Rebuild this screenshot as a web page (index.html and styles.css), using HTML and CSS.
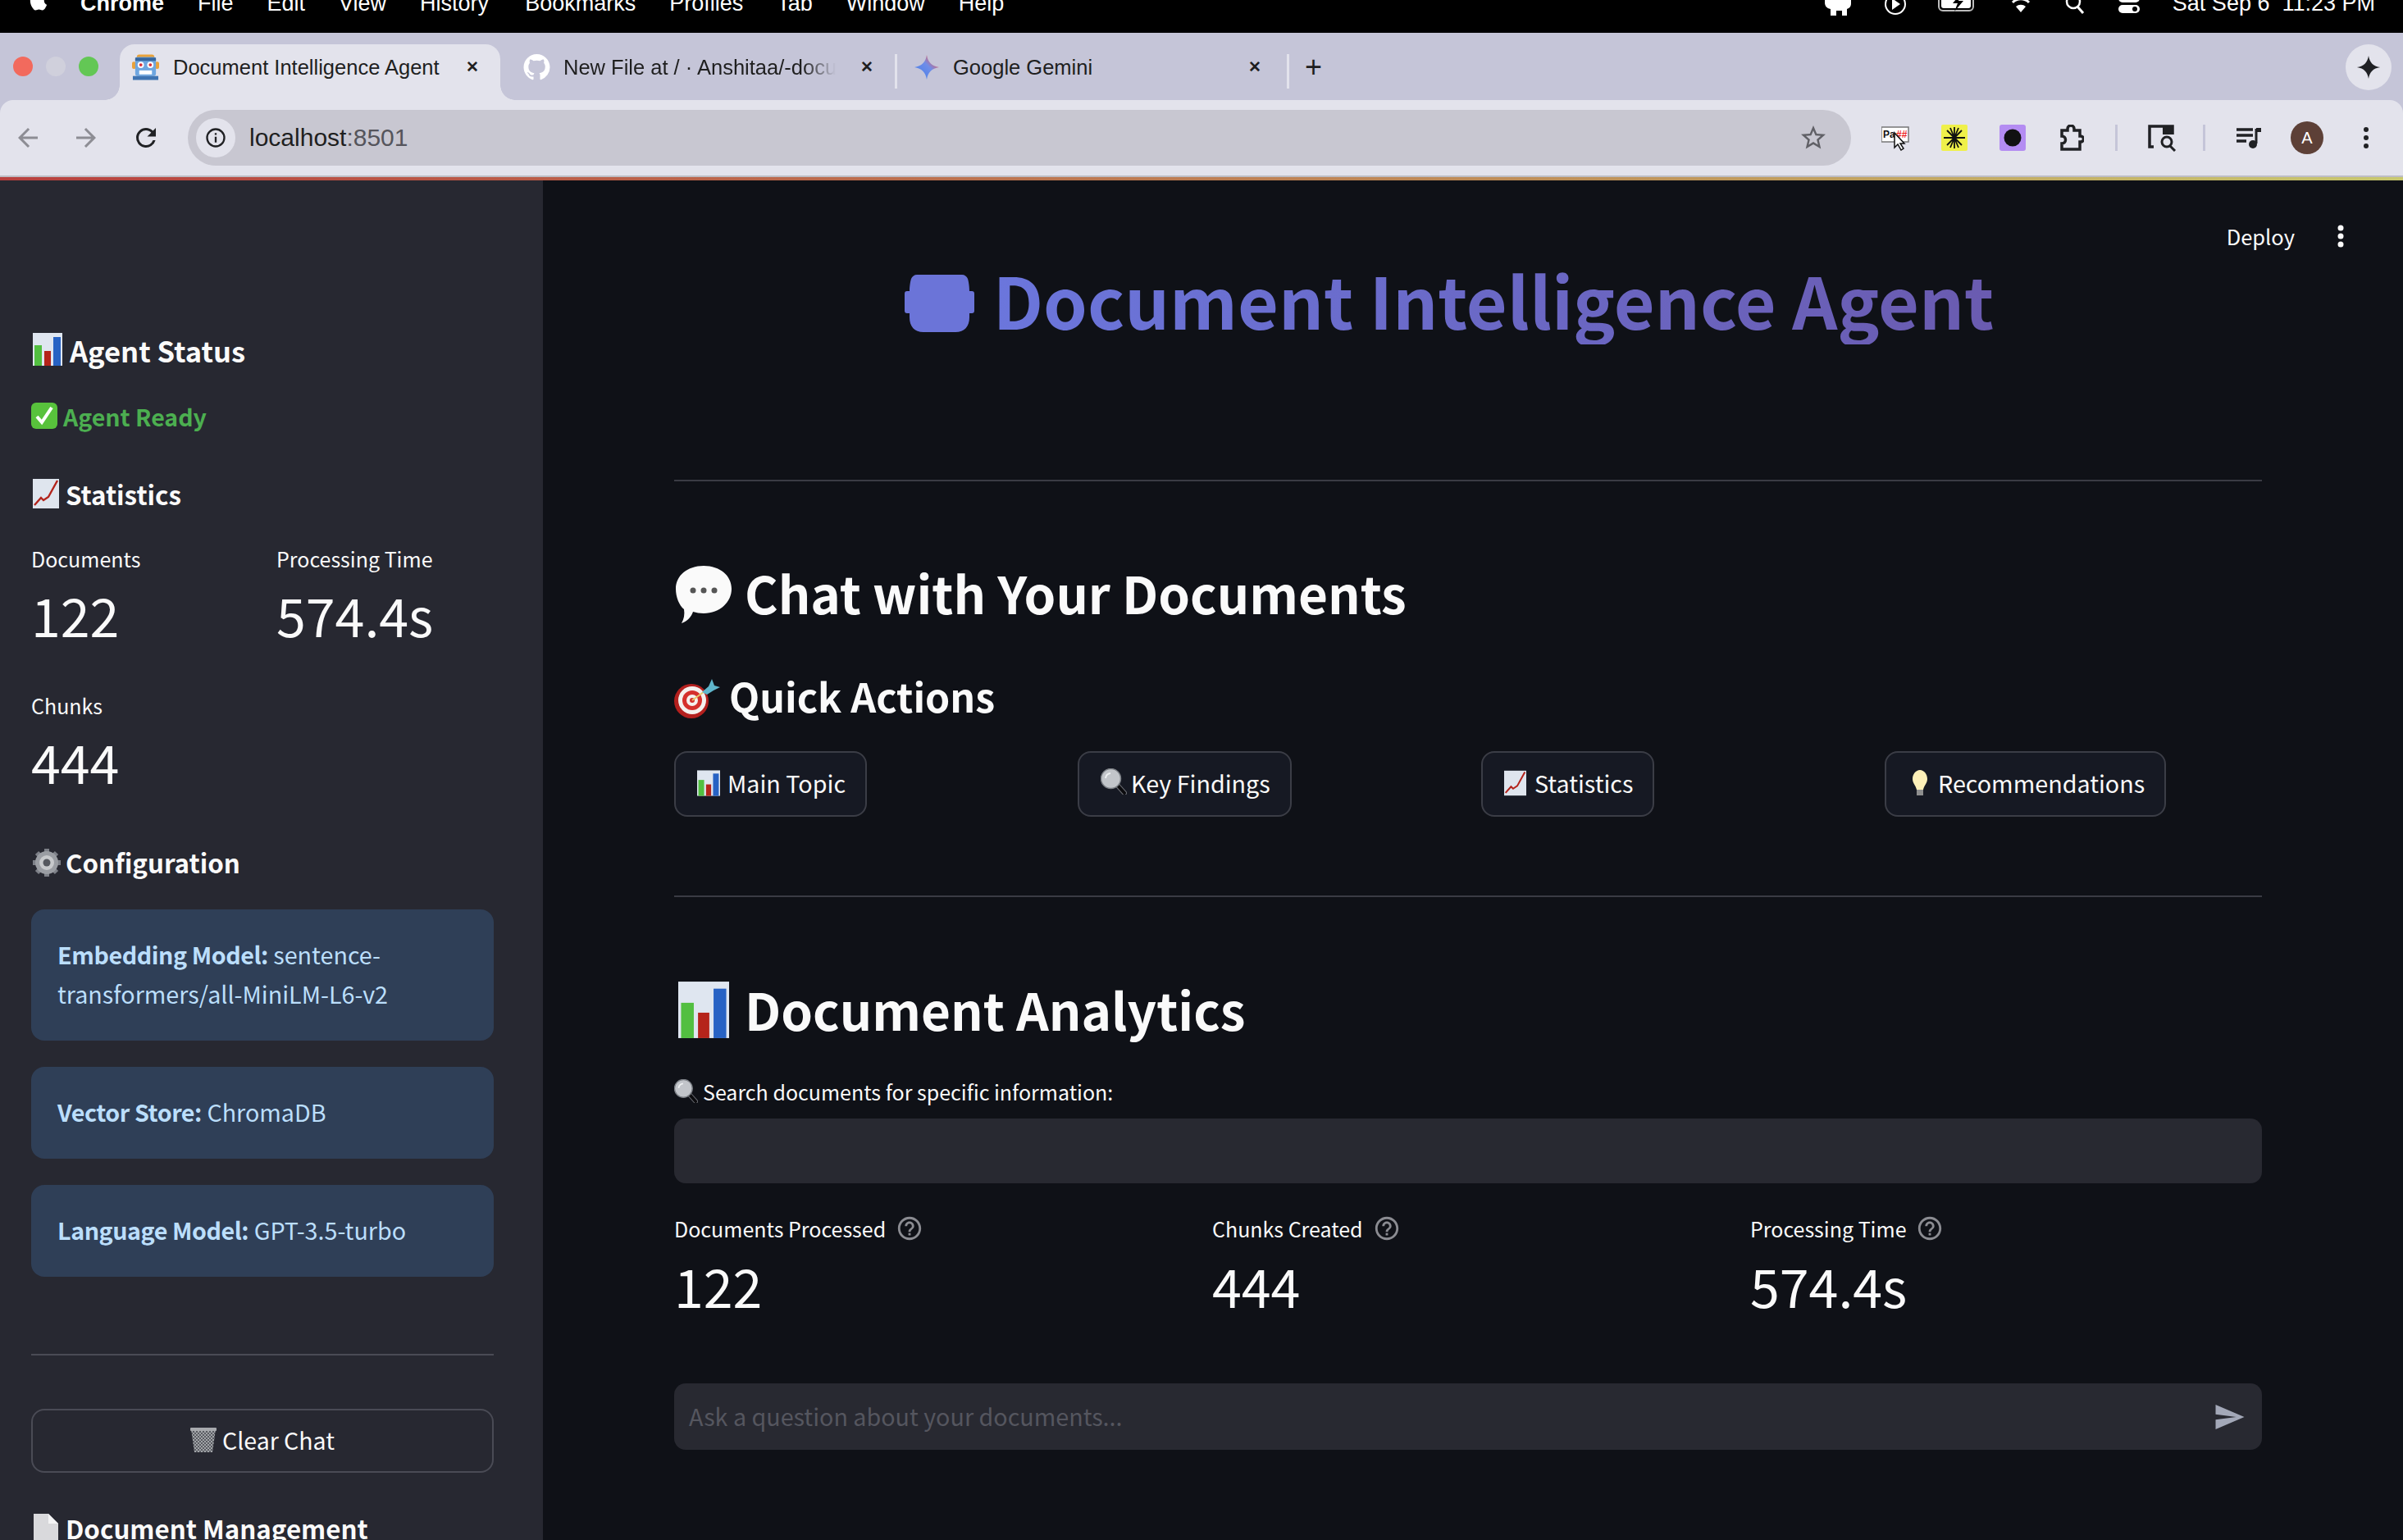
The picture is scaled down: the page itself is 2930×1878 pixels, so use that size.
FILE: index.html
```html
<!DOCTYPE html>
<html lang="en">
<head>
    <meta charset="UTF-8">
    <title>Document Intelligence Agent</title>
    <link rel="stylesheet" href="styles.css">
</head>
<body>
    <!-- emoji drawings used more than once -->
    <svg class="defs" aria-hidden="true">
        <symbol id="bars" viewBox="0 0 36 40">
            <rect width="36" height="40" fill="#dfe6f0"/>
            <rect x="2" y="15" width="9" height="25" fill="#52bf40"/>
            <rect x="14" y="22" width="8" height="18" fill="#b5241b"/>
            <rect x="25" y="5" width="9" height="35" fill="#2762c4"/>
        </symbol>
        <symbol id="trend" viewBox="0 0 32 36">
            <rect width="32" height="36" fill="#dfe5ee"/>
            <path d="M2 32l8-9 3 3 6-4L30 2" fill="none" stroke="#b3231b" stroke-width="2.4"/>
        </symbol>
        <symbol id="lens" viewBox="0 0 32 32">
            <path d="M20 20l9 10" stroke="#6d6f75" stroke-width="6" stroke-linecap="round"/>
            <path d="M21 21l8 9" stroke="#0b0b0e" stroke-width="4" stroke-linecap="round"/>
            <circle cx="12.500" cy="12.500" r="12" fill="#c2c5ca" stroke="#7b7f85" stroke-width="1.500"/>
            <path d="M6 12a7 7 0 0 1 6-6" fill="none" stroke="#eef0f2" stroke-width="2"/>
        </symbol>
        <symbol id="help" viewBox="0 0 24 24">
            <path fill="#8b8c92" d="M11 18h2v-2h-2v2zm1-16C6.48 2 2 6.48 2 12s4.48 10 10 10 10-4.48 10-10S17.52 2 12 2zm0 18c-4.41 0-8-3.59-8-8s3.59-8 8-8 8 3.59 8 8-3.59 8-8 8zm0-14c-2.21 0-4 1.79-4 4h2c0-1.1.9-2 2-2s2 .9 2 2c0 2-3 1.75-3 5h2c0-2.25 3-2.5 3-5 0-2.21-1.79-4-4-4z"/>
        </symbol>
    </svg>

    <div class="menubar">
        <svg class="apple" viewBox="0 0 24 24"><path fill="#fff" d="M18.71 19.5c-.83 1.24-1.71 2.45-3.05 2.47-1.34.03-1.77-.79-3.29-.79-1.53 0-2 .77-3.27.82-1.31.05-2.3-1.32-3.14-2.53C4.25 17 2.94 12.45 4.7 9.39c.87-1.52 2.43-2.48 4.12-2.51 1.28-.02 2.5.87 3.29.87.78 0 2.26-1.07 3.81-.91.65.03 2.47.26 3.64 1.98-.09.06-2.17 1.28-2.15 3.81.03 3.02 2.65 4.03 2.68 4.04-.03.07-.42 1.44-1.38 2.83M13 3.5c.73-.83 1.94-1.46 2.94-1.5.13 1.17-.34 2.35-1.04 3.19-.69.85-1.83 1.51-2.95 1.42-.15-1.15.41-2.35 1.05-3.11z"/></svg>
        <span class="menu-app">Chrome</span>
        <span>File</span><span>Edit</span><span>View</span><span>History</span><span class="menu-wide">Bookmarks</span><span>Profiles</span><span>Tab</span><span>Window</span><span>Help</span>
        <div class="menu-status">
            <svg width="36" height="20" viewBox="0 0 36 20"><path fill="#fff" d="M2 -6h32v10c0 4-2 6-5 7v8h-6v-6h-7v6H9v-8C4 10 2 7 2 3z"/></svg>
            <svg width="26" height="20" viewBox="0 0 26 20"><circle cx="13" cy="5" r="12" fill="none" stroke="#fff" stroke-width="2"/><path fill="#fff" d="M9 -2l10 7-10 7z"/></svg>
            <svg width="48" height="20" viewBox="0 0 48 20"><rect x="1" y="-8" width="42" height="21" rx="5" fill="none" stroke="#bbb" stroke-width="2"/><rect x="4" y="-6" width="36" height="16" rx="3" fill="#fff"/><path d="M28 -8l-10 12h6l-4 10 11-13h-6z" fill="#000"/></svg>
            <svg width="28" height="20" viewBox="0 0 28 20"><path fill="#fff" d="M14 15l-6-7a9 9 0 0 1 12 0z"/><path d="M4 3a14 14 0 0 1 20 0" fill="none" stroke="#fff" stroke-width="3"/></svg>
            <svg width="26" height="20" viewBox="0 0 26 20"><circle cx="11" cy="2" r="8" fill="none" stroke="#fff" stroke-width="2.5"/><path d="M16 8l7 8" stroke="#fff" stroke-width="3"/></svg>
            <svg width="28" height="20" viewBox="0 0 28 20"><rect x="1" y="-8" width="26" height="11" rx="5" fill="#fff"/><rect x="1" y="6" width="26" height="10" rx="5" fill="#fff"/><circle cx="21" cy="11" r="3" fill="#000"/></svg>
            <span>Sat Sep 6&nbsp;&nbsp;11:23 PM</span>
        </div>
    </div>

    <div class="browser">
        <div class="tabstrip">
            <div class="lights">
                <i class="light red"></i><i class="light grey"></i><i class="light green"></i>
            </div>
            <div class="tab tab-active">
                <svg class="favicon" viewBox="0 0 34 32">
                    <rect x="6" y="0" width="22" height="6" rx="3" fill="#e9a23b"/>
                    <rect x="0" y="9" width="5" height="9" rx="2" fill="#e9a23b"/>
                    <rect x="29" y="9" width="5" height="9" rx="2" fill="#e9a23b"/>
                    <rect x="4" y="3" width="26" height="24" rx="3" fill="#6ea6e0"/>
                    <rect x="4" y="4" width="26" height="4" fill="#35659e"/>
                    <circle cx="11" cy="13" r="4" fill="#fff"/><circle cx="11" cy="13" r="2" fill="#d8323c"/>
                    <circle cx="23" cy="13" r="4" fill="#fff"/><circle cx="23" cy="13" r="2" fill="#d8323c"/>
                    <rect x="9" y="20" width="16" height="5" fill="#fff"/>
                    <rect x="1" y="27" width="32" height="5" fill="#3f74b2"/>
                </svg>
                <span class="tab-title">Document Intelligence Agent</span>
                <span class="tab-close">&#x2715;</span>
            </div>
            <div class="tab tab-github">
                <svg class="favicon" viewBox="0 0 16 16"><path fill="#fff" d="M8 0C3.58 0 0 3.58 0 8c0 3.54 2.29 6.53 5.47 7.59.4.07.55-.17.55-.38 0-.19-.01-.82-.01-1.49-2.01.37-2.53-.49-2.69-.94-.09-.23-.48-.94-.82-1.13-.28-.15-.68-.52-.01-.53.63-.01 1.08.58 1.23.82.72 1.21 1.87.87 2.33.66.07-.52.28-.87.51-1.07-1.78-.2-3.64-.89-3.64-3.95 0-.87.31-1.59.82-2.15-.08-.2-.36-1.02.08-2.12 0 0 .67-.21 2.2.82.64-.18 1.32-.27 2-.27s1.36.09 2 .27c1.53-1.04 2.2-.82 2.2-.82.44 1.1.16 1.92.08 2.12.51.56.82 1.27.82 2.15 0 3.07-1.87 3.75-3.65 3.95.29.25.54.73.54 1.48 0 1.07-.01 1.93-.01 2.2 0 .21.15.46.55.38A8.01 8.01 0 0 0 16 8c0-4.42-3.58-8-8-8z"/></svg>
                <span class="tab-title tab-fade">New File at / &middot; Anshitaa/-docu</span>
                <span class="tab-close">&#x2715;</span>
            </div>
            <div class="tab tab-gemini">
                <svg class="favicon" viewBox="0 0 32 32">
                    <defs><linearGradient id="gem" x1="0" y1="1" x2="1" y2="0"><stop offset="0" stop-color="#3f7be8"/><stop offset=".55" stop-color="#6f8de8"/><stop offset=".8" stop-color="#d96570"/><stop offset="1" stop-color="#e8b24a"/></linearGradient></defs>
                    <path fill="url(#gem)" d="M16 1c1.5 9 6 13.500 15 15-9 1.500-13.500 6-15 15-1.500-9-6-13.500-15-15 9-1.500 13.500-6 15-15z"/>
                </svg>
                <span class="tab-title">Google Gemini</span>
                <span class="tab-close">&#x2715;</span>
            </div>
            <span class="new-tab">+</span>
            <div class="gemini-btn">
                <svg width="30" height="30" viewBox="0 0 32 32"><path fill="#1f2024" d="M16 1c1.500 9 6 13.500 15 15-9 1.500-13.500 6-15 15-1.500-9-6-13.500-15-15 9-1.500 13.500-6 15-15z"/></svg>
            </div>
        </div>
        <div class="toolbar">
            <svg class="nav-icon" viewBox="0 0 24 24"><path fill="#8d8d94" d="M20 11H7.830l5.590-5.590L12 4l-8 8 8 8 1.410-1.410L7.830 13H20z"/></svg>
            <svg class="nav-icon" viewBox="0 0 24 24"><path fill="#8d8d94" d="M4 11h12.170l-5.590-5.590L12 4l8 8-8 8-1.410-1.410L16.170 13H4z"/></svg>
            <svg class="nav-icon" viewBox="0 0 24 24"><path fill="#202124" d="M17.650 6.350A7.960 7.960 0 0 0 12 4a8 8 0 1 0 7.730 10h-2.080A6 6 0 1 1 12 6c1.660 0 3.140.69 4.220 1.780L13 11h7V4z"/></svg>
            <div class="omnibox">
                <span class="site-info">
                    <svg width="28" height="28" viewBox="0 0 24 24"><path fill="#202124" d="M11 7h2v2h-2zm0 4h2v6h-2zm1-9a10 10 0 1 0 0 20 10 10 0 0 0 0-20zm0 18a8 8 0 1 1 0-16 8 8 0 0 1 0 16z"/></svg>
                </span>
                <span class="url">localhost<span class="url-port">:8501</span></span>
                <svg class="star" viewBox="0 0 24 24"><path fill="#606066" d="M22 9.240l-7.190-.62L12 2 9.190 8.630 2 9.240l5.460 4.730L5.820 21 12 17.270 18.180 21l-1.630-7.030zM12 15.400l-3.760 2.270 1-4.280-3.320-2.880 4.380-.38L12 6.100l1.710 4.040 4.380.38-3.320 2.880 1 4.280z"/></svg>
            </div>
            <div class="ext-row">
                <svg class="ext" width="34" height="32" viewBox="0 0 34 32">
                    <rect x="0" y="3" width="33" height="18" fill="#fff" stroke="#777" stroke-width="1.500"/>
                    <text x="2" y="16" font-size="12" font-weight="700" font-family="Liberation Sans" fill="#111">Pa</text>
                    <text x="18" y="16" font-size="12" font-weight="700" font-family="Liberation Sans" fill="#e22">##</text>
                    <path d="M16 10v18l4-4 4 7 3-2-4-6h5z" fill="#fff" stroke="#111" stroke-width="1.500"/>
                </svg>
                <svg class="ext" width="32" height="32" viewBox="0 0 32 32">
                    <rect width="32" height="32" rx="2" fill="#eff04a"/>
                    <path d="M16 3v26M7 7l18 18M25 7L7 25M3 16h26M11 4l10 24M21 4L11 28" stroke="#111" stroke-width="1.800"/>
                </svg>
                <svg class="ext" width="32" height="32" viewBox="0 0 32 32">
                    <rect width="32" height="32" rx="3" fill="#b48cf2"/>
                    <circle cx="16" cy="16" r="10.500" fill="#111"/>
                </svg>
                <svg class="ext" width="32" height="32" viewBox="0 0 32 32"><path fill="none" stroke="#202124" stroke-width="3.500" d="M5 7h7V5a4 4 0 0 1 8 0v2h7v7h1a3 3 0 0 1 0 7h-1v9H5v-7a4.500 4.500 0 0 0 0-9z"/></svg>
                <i class="ext-sep"></i>
                <svg class="ext ext-search" width="36" height="34" viewBox="0 0 36 34">
                    <path d="M8 28H3V3h28v10" fill="none" stroke="#202124" stroke-width="3.500"/>
                    <rect x="19" y="2" width="13" height="11" fill="#202124"/>
                    <circle cx="24" cy="22" r="6" fill="none" stroke="#202124" stroke-width="3"/>
                    <path d="M28 27l6 6" stroke="#202124" stroke-width="3"/>
                </svg>
                <i class="ext-sep ext-sep-last"></i>
                <svg class="ext" width="30" height="30" viewBox="0 0 30 30">
                    <path d="M0 5h20M0 12h20M0 19h12" stroke="#202124" stroke-width="3.500"/>
                    <path d="M24 4v18" stroke="#202124" stroke-width="3"/><path d="M24 3h6v5h-6z" fill="#202124"/>
                    <circle cx="20" cy="23" r="5" fill="#202124"/>
                </svg>
                <span class="avatar">A</span>
                <svg class="ext-dots" width="8" height="28" viewBox="0 0 8 28"><circle cx="4" cy="4" r="3" fill="#202124"/><circle cx="4" cy="14" r="3" fill="#202124"/><circle cx="4" cy="24" r="3" fill="#202124"/></svg>
            </div>
        </div>
    </div>
    <div class="decoration"></div>

    <div class="app">
        <aside class="sidebar">
            <h3 class="side-title side-status">
                <svg class="emoji-status"><use href="#bars"/></svg>Agent Status
            </h3>
            <p class="agent-ready">
                <svg class="emoji-check" viewBox="0 0 32 32"><rect width="32" height="32" rx="6" fill="#58c23c"/><path d="M7 17l6 7L25 6" fill="none" stroke="#fff" stroke-width="4"/></svg>Agent Ready
            </p>
            <h3 class="side-title side-stats">
                <svg class="emoji-trend"><use href="#trend"/></svg>Statistics
            </h3>
            <div class="side-metrics">
                <div class="side-metric">
                    <div class="metric-label">Documents</div>
                    <div class="side-value">122</div>
                </div>
                <div class="side-metric">
                    <div class="metric-label">Processing Time</div>
                    <div class="side-value">574.4s</div>
                </div>
                <div class="side-metric side-metric-wide">
                    <div class="metric-label">Chunks</div>
                    <div class="side-value">444</div>
                </div>
            </div>
            <h3 class="side-title side-config">
                <svg class="emoji-gear" viewBox="0 0 36 36">
                    <path d="M18 1v34M1 18h34M6 6l24 24M30 6L6 30" stroke="#7d8088" stroke-width="6"/>
                    <circle cx="18" cy="18" r="14" fill="#9a9da3"/>
                    <circle cx="18" cy="18" r="9" fill="#c7c9cc"/>
                    <circle cx="18" cy="18" r="4.500" fill="#55585f"/>
                </svg>Configuration
            </h3>
            <div class="config-card"><strong>Embedding Model:</strong> sentence-transformers/all-MiniLM-L6-v2</div>
            <div class="config-card"><strong>Vector Store:</strong> ChromaDB</div>
            <div class="config-card"><strong>Language Model:</strong> GPT-3.5-turbo</div>
            <hr class="side-rule">
            <button class="clear-btn">
                <svg class="emoji-trash" viewBox="0 0 32 32">
                    <defs><pattern id="mesh" width="4" height="4" patternUnits="userSpaceOnUse"><rect width="4" height="4" fill="#5a5c62"/><path d="M0 0l4 4M4 0L0 4" stroke="#b4b6ba" stroke-width=".8"/></pattern></defs>
                    <path d="M1 3h30l-4 28H5z" fill="url(#mesh)"/>
                    <rect x="0" y="1" width="32" height="4" rx="1" fill="#a8aaae"/>
                </svg>Clear Chat
            </button>
            <h3 class="side-title side-docs">
                <svg class="emoji-page" viewBox="0 0 30 40"><path d="M0 0h18l12 12v28H0z" fill="#d9d9dc"/><path d="M18 0l12 12H18z" fill="#f4f4f5"/></svg>Document Management
            </h3>
        </aside>

        <main class="main">
            <div class="top-actions">
                <span class="deploy">Deploy</span>
                <svg width="8" height="28" viewBox="0 0 8 28"><circle cx="4" cy="4" r="3.500" fill="#fafafa"/><circle cx="4" cy="14" r="3.500" fill="#fafafa"/><circle cx="4" cy="24" r="3.500" fill="#fafafa"/></svg>
            </div>

            <h1 class="page-title">
                <svg class="title-icon" viewBox="0 0 85 70"><path fill="#6b74d8" d="M6 20c0-6 1-12 2-15 1-3 4-5 7-5h55c3 0 6 2 7 5 1 3 2 9 2 15h3c2 0 3 1 3 3v21c0 2-1 3-3 3h-3v5c0 11-6 18-17 18H23C12 70 6 63 6 52v-5H3c-2 0-3-1-3-3V23c0-2 1-3 3-3z"/></svg>
                <span class="title-text">Document Intelligence Agent</span>
            </h1>
            <hr class="rule rule-title">

            <h2 class="section-title section-chat">
                <svg class="emoji-bubble" viewBox="0 0 68 70">
                    <path fill="#fafafa" d="M34 0c20 0 34 12 34 28S54 58 34 58c-5 0-9-1-13-2-2 6-7 12-14 14 3-5 4-11 3-17C4 48 0 38 0 28 0 12 14 0 34 0z"/>
                    <circle cx="21" cy="30" r="3.500" fill="#555"/><circle cx="34" cy="30" r="3.500" fill="#555"/><circle cx="47" cy="30" r="3.500" fill="#555"/>
                </svg>Chat with Your Documents
            </h2>
            <h3 class="sub-title">
                <svg class="emoji-dart" viewBox="0 0 56 48">
                    <circle cx="21" cy="27" r="21" fill="#b3201e"/>
                    <circle cx="22" cy="26" r="17" fill="#f4f1ee"/>
                    <circle cx="22" cy="26" r="12" fill="#d5302c"/>
                    <circle cx="22" cy="26" r="7" fill="#f4f1ee"/>
                    <circle cx="22" cy="26" r="3" fill="#d5302c"/>
                    <path d="M22 26L44 10" stroke="#e8c86a" stroke-width="2"/>
                    <path d="M34 16l8-7 4-9 3 8 7 2-8 4-8 5z" fill="#5fb6cc"/>
                </svg>Quick Actions
            </h3>
            <div class="quick-grid">
                <div><button class="quick-btn"><svg class="emoji-btn"><use href="#bars"/></svg>Main Topic</button></div>
                <div><button class="quick-btn"><svg class="emoji-btn-lens"><use href="#lens"/></svg>Key Findings</button></div>
                <div><button class="quick-btn"><svg class="emoji-btn-trend"><use href="#trend"/></svg>Statistics</button></div>
                <div><button class="quick-btn">
                    <svg class="emoji-bulb" viewBox="0 0 20 32"><path fill="#fdf0b8" d="M10 0c5 0 9 5 9 11 0 5-4 8-5 13H6C5 19 1 16 1 11 1 5 5 0 10 0z"/><rect x="6" y="24" width="8" height="7" fill="#8e8e8e"/></svg>Recommendations
                </button></div>
            </div>
            <hr class="rule rule-actions">

            <h2 class="section-title section-analytics">
                <svg class="emoji-chart"><use href="#bars"/></svg>Document Analytics
            </h2>
            <label class="search-label"><svg class="emoji-search"><use href="#lens"/></svg>Search documents for specific information:</label>
            <div class="search-input"></div>
            <div class="metric-grid">
                <div class="metric">
                    <div class="metric-label">Documents Processed <svg class="help-icon"><use href="#help"/></svg></div>
                    <div class="metric-value">122</div>
                </div>
                <div class="metric">
                    <div class="metric-label">Chunks Created <svg class="help-icon"><use href="#help"/></svg></div>
                    <div class="metric-value">444</div>
                </div>
                <div class="metric">
                    <div class="metric-label">Processing Time <svg class="help-icon"><use href="#help"/></svg></div>
                    <div class="metric-value">574.4s</div>
                </div>
            </div>
            <div class="chat-input">
                <span class="chat-placeholder">Ask a question about your documents...</span>
                <svg class="send-icon" viewBox="2 3 21 18"><path fill="#a3a8b8" d="M2.010 21L23 12 2.010 3 2 10l15 2-15 2z"/></svg>
            </div>
        </main>
    </div>
</body>
</html>
```
FILE: styles.css
```css
* {
    box-sizing: border-box;
}
html, body {
    margin: 0;
    height: 100%;
}
body {
    width: 2930px;
    height: 1878px;
    overflow: hidden;
    display: flex;
    flex-direction: column;
    background-color: #0f1117;
    color: #fafafa;
    font-family: "Noto Sans CJK JP", "Noto Sans", sans-serif;
}
.defs {
    display: none;
}
h1, h2, h3, p {
    margin: 0;
}

/* mac menu bar */
.menubar {
    height: 40px;
    flex: none;
    display: flex;
    align-items: flex-start;
    gap: 41px;
    padding-left: 32px;
    overflow: hidden;
    background-color: #000;
    color: #fff;
    font-family: "Liberation Sans", Arial, sans-serif;
    font-size: 27px;
    line-height: 30px;
}
.menubar > span {
    margin-top: -11px;
}
.menubar .menu-app {
    font-weight: 700;
}
.menubar .menu-wide {
    margin-left: 3px;
}
.apple {
    width: 30px;
    height: 34px;
    margin: -17px -5px 0 0;
}
.menu-status {
    margin-left: auto;
    display: flex;
    align-items: flex-start;
    gap: 39px;
    padding-right: 34px;
}
.menu-status span {
    margin-top: -11px;
}

/* browser chrome */
.browser {
    flex: none;
    background-color: #c5c5d8;
    font-family: "Liberation Sans", Arial, sans-serif;
    color: #1f1f1f;
}
.tabstrip {
    height: 82px;
    display: flex;
    align-items: flex-end;
}
.lights {
    width: 146px;
    height: 68px;
    flex: none;
    display: flex;
    gap: 16px;
    padding: 15px 0 0 16px;
}
.light {
    width: 24px;
    height: 24px;
    border-radius: 50%;
}
.red { background-color: #f26a5d; }
.grey { background-color: #d0d0dc; }
.green { background-color: #63c755; }

.tab {
    height: 68px;
    flex: none;
    display: flex;
    align-items: flex-start;
    padding-top: 12px;
    font-size: 25.5px;
    line-height: 32px;
}
.tab-active {
    position: relative;
    width: 464px;
    padding-left: 15px;
    background-color: #e3e3ec;
    border-radius: 18px 18px 0 0;
}
.tab-active::before,
.tab-active::after {
    content: "";
    position: absolute;
    bottom: 0;
    width: 18px;
    height: 18px;
}
.tab-active::before {
    left: -18px;
    background: radial-gradient(circle at 0 0, transparent 17.500px, #e3e3ec 18px);
}
.tab-active::after {
    right: -18px;
    background: radial-gradient(circle at 100% 0, transparent 17.500px, #e3e3ec 18px);
}
.tab-github {
    width: 484px;
    padding-left: 28px;
    border-right: 3px solid #e3e3ec;
    height: 42px;
    margin-bottom: 14px;
    padding-top: 0;
    align-self: flex-end;
}
.tab-gemini {
    width: 478px;
    padding-left: 20px;
    border-right: 3px solid #e3e3ec;
    height: 42px;
    margin-bottom: 14px;
    padding-top: 0;
}
.favicon {
    width: 33px;
    height: 32px;
    flex: none;
    margin-right: 16px;
}
.tab-active .favicon {
    margin-right: 17px;
}
.tab-gemini .favicon {
    margin-right: 16px;
    width: 32px;
}
.tab-title {
    white-space: nowrap;
    width: 327px;
    flex: none;
    overflow: hidden;
}
.tab-fade {
    width: 332px;
    -webkit-mask-image: linear-gradient(90deg, #000 88%, transparent);
}
.tab-gemini .tab-title {
    width: 360px;
}
.tab-close {
    flex: none;
    margin-left: 30px;
    font-size: 19px;
    font-weight: 700;
}
.tab-gemini .tab-close {
    margin-left: 0;
}
.new-tab {
    flex: none;
    margin: 0 0 21px 19px;
    font-size: 36px;
    line-height: 38px;
}
.gemini-btn {
    margin: 0 14px 12px auto;
    width: 56px;
    height: 56px;
    display: flex;
    align-items: center;
    justify-content: center;
    border-radius: 50%;
    background-color: #e3e3ec;
}
.toolbar {
    height: 94px;
    display: flex;
    align-items: center;
    padding: 0 0 0 16px;
    background-color: #e3e3ec;
    border-bottom: 2px solid #bdbdc4;
    border-radius: 16px 16px 0 0;
}
.nav-icon {
    width: 36px;
    height: 36px;
    flex: none;
    margin-right: 35px;
}
.nav-icon + .nav-icon {
    margin-right: 37px;
}
.nav-icon + .nav-icon + .nav-icon {
    margin-right: 33px;
}
.omnibox {
    width: 2028px;
    height: 68px;
    flex: none;
    display: flex;
    align-items: center;
    padding: 0 28px 0 10px;
    border-radius: 34px;
    background-color: #c8c7d1;
}
.site-info {
    width: 48px;
    height: 48px;
    display: flex;
    align-items: center;
    justify-content: center;
    border-radius: 50%;
    background-color: #e3e3ec;
}
.url {
    margin-left: 17px;
    font-size: 30px;
    color: #1f1f1f;
}
.url-port {
    color: #55555c;
}
.star {
    width: 36px;
    height: 36px;
    margin-left: auto;
}
.ext-row {
    flex: 1;
    display: flex;
    align-items: center;
    padding-left: 37px;
}
.ext {
    flex: none;
    margin-right: 39px;
}
.ext-search {
    margin-right: 33px;
}
.ext-sep {
    width: 3px;
    height: 32px;
    margin: 0 36px 0 -1px;
    background-color: #c5c5d8;
}
.ext-sep-last {
    margin-right: 38px;
}
.avatar {
    width: 40px;
    height: 40px;
    flex: none;
    margin-left: -3px;
    display: flex;
    align-items: center;
    justify-content: center;
    border-radius: 50%;
    background-color: #5d4037;
    color: #fff;
    font-size: 20px;
}
.ext-dots {
    margin-left: 48px;
}
.decoration {
    height: 4px;
    flex: none;
    background: linear-gradient(90deg, #b8403e, #c0965a 70%, #c8c86e);
}

/* streamlit app */
.app {
    flex: 1;
    display: flex;
    min-height: 0;
}
.sidebar {
    width: 662px;
    flex: none;
    padding: 183px 60px 0 38px;
    overflow: hidden;
    background-color: #272831;
}
.side-title {
    display: flex;
    align-items: center;
    font-size: 31.3px;
    font-weight: 700;
    line-height: 48px;
    white-space: nowrap;
}
.side-status {
    font-size: 34.5px;
}
.emoji-status {
    width: 36px;
    height: 40px;
    margin: -2px 9px 0 2px;
}
.agent-ready {
    display: flex;
    align-items: center;
    margin-top: 37px;
    color: #4caf50;
    font-size: 28.5px;
    font-weight: 700;
    line-height: 40px;
}
.emoji-check {
    width: 32px;
    height: 32px;
    margin: -2px 7px 0 0;
}
.side-stats {
    margin-top: 51px;
}
.emoji-trend {
    width: 32px;
    height: 36px;
    margin: -2px 8px 0 2px;
}
.side-metrics {
    display: grid;
    grid-template-columns: 265px 265px;
    column-gap: 34px;
    row-gap: 53px;
    margin-top: 36px;
}
.side-metric-wide {
    grid-column: 1 / 3;
}
.metric-label {
    display: flex;
    align-items: center;
    font-size: 25px;
    line-height: 36px;
    white-space: nowrap;
}
.side-value {
    margin-top: 10px;
    font-size: 64.5px;
    line-height: 80px;
}
.side-config {
    margin-top: 60px;
}
.emoji-gear {
    width: 36px;
    height: 36px;
    margin: 0 5px 0 1px;
}
.config-card {
    margin-top: 32px;
    padding: 31px 28px 33px 32px;
    border-radius: 16px;
    background-color: #2f3f57;
    color: #bbdefb;
    font-size: 28.7px;
    line-height: 48px;
}
.config-card strong {
    letter-spacing: -0.45px;
}
.side-config + .config-card {
    margin-top: 33px;
}
.side-rule {
    margin: 94px 0 0;
    border: 0;
    border-top: 2px solid #4a4b55;
}
.clear-btn {
    width: 100%;
    height: 78px;
    margin-top: 65px;
    padding-bottom: 4px;
    display: flex;
    align-items: center;
    justify-content: center;
    border: 2px solid #4a4b55;
    border-radius: 16px;
    background-color: transparent;
    color: #fafafa;
    font-family: inherit;
    font-size: 28.5px;
}
.emoji-trash {
    width: 32px;
    height: 32px;
    margin-right: 7px;
}
.side-docs {
    margin-top: 44px;
}
.emoji-page {
    width: 30px;
    height: 40px;
    margin: 4px 9px 0 3px;
}

.main {
    position: relative;
    flex: 1;
    min-width: 0;
    padding: 90px 172px 0 160px;
}
.top-actions {
    position: absolute;
    top: 50px;
    right: 72px;
    display: flex;
    align-items: center;
    gap: 52px;
}
.deploy {
    font-size: 25.5px;
    line-height: 36px;
}
.page-title {
    display: flex;
    align-items: center;
    justify-content: center;
    padding-right: 46px;
    font-size: 86px;
    font-weight: 700;
    line-height: 110px;
}
.title-icon {
    width: 85px;
    height: 70px;
    margin: 10px 23px 0 0;
}
.title-text {
    background: linear-gradient(90deg, #6b76dc, #6a5bb0);
    -webkit-background-clip: text;
    background-clip: text;
    color: transparent;
}
.rule {
    margin: 0;
    border: 0;
    border-top: 2px solid #3a3b44;
}
.rule-title {
    margin-top: 165px;
}
.section-title {
    display: flex;
    align-items: center;
    font-size: 62px;
    font-weight: 700;
    line-height: 76px;
    white-space: nowrap;
}
.section-chat {
    margin-top: 97px;
}
.emoji-bubble {
    width: 68px;
    height: 70px;
    margin: 5px 16px 0 2px;
}
.sub-title {
    display: flex;
    align-items: center;
    margin-top: 56px;
    font-size: 48.3px;
    font-weight: 700;
    line-height: 64px;
}
.emoji-dart {
    width: 56px;
    height: 48px;
    margin: 7px 11px 0 0;
}
.quick-grid {
    display: grid;
    grid-template-columns: repeat(4, 1fr);
    column-gap: 32px;
    margin-top: 36px;
}
.quick-btn {
    height: 80px;
    display: inline-flex;
    align-items: center;
    padding: 0 24px 3px 26px;
    border: 2px solid #3b3d46;
    border-radius: 16px;
    background-color: #161923;
    color: #fafafa;
    font-family: inherit;
    font-size: 28.7px;
    white-space: nowrap;
}
.emoji-btn {
    width: 28px;
    height: 32px;
    margin-right: 9px;
}
.emoji-btn-lens {
    width: 32px;
    height: 32px;
    margin: -3px 5px 0 0;
}
.emoji-btn-trend {
    width: 27px;
    height: 32px;
    margin-right: 10px;
}
.emoji-bulb {
    width: 20px;
    height: 32px;
    margin: 0 12px 0 5px;
}
.rule-actions {
    margin-top: 96px;
}
.section-analytics {
    margin-top: 98px;
}
.emoji-chart {
    width: 62px;
    height: 71px;
    margin: 2px 19px 0 5px;
}
.search-label {
    display: flex;
    align-items: center;
    margin-top: 45px;
    font-size: 25px;
    line-height: 36px;
    white-space: nowrap;
}
.emoji-search {
    width: 29px;
    height: 29px;
    margin: -2px 6px 0 0;
}
.search-input {
    height: 79px;
    margin-top: 15px;
    border-radius: 14px;
    background-color: #282931;
}
.metric-grid {
    display: grid;
    grid-template-columns: repeat(3, 1fr);
    column-gap: 32px;
    margin-top: 37px;
}
.help-icon {
    width: 34px;
    height: 34px;
    margin-left: 12px;
}
.metric-value {
    margin-top: 11px;
    font-size: 64.5px;
    line-height: 80px;
}
.chat-input {
    height: 81px;
    margin-top: 80px;
    display: flex;
    align-items: center;
    justify-content: space-between;
    padding: 0 21px 3px 18px;
    border-radius: 14px;
    background-color: #282931;
}
.chat-placeholder {
    color: #55565f;
    font-size: 28.7px;
}
.send-icon {
    width: 36px;
    height: 30px;
    margin-top: 3px;
}
```
